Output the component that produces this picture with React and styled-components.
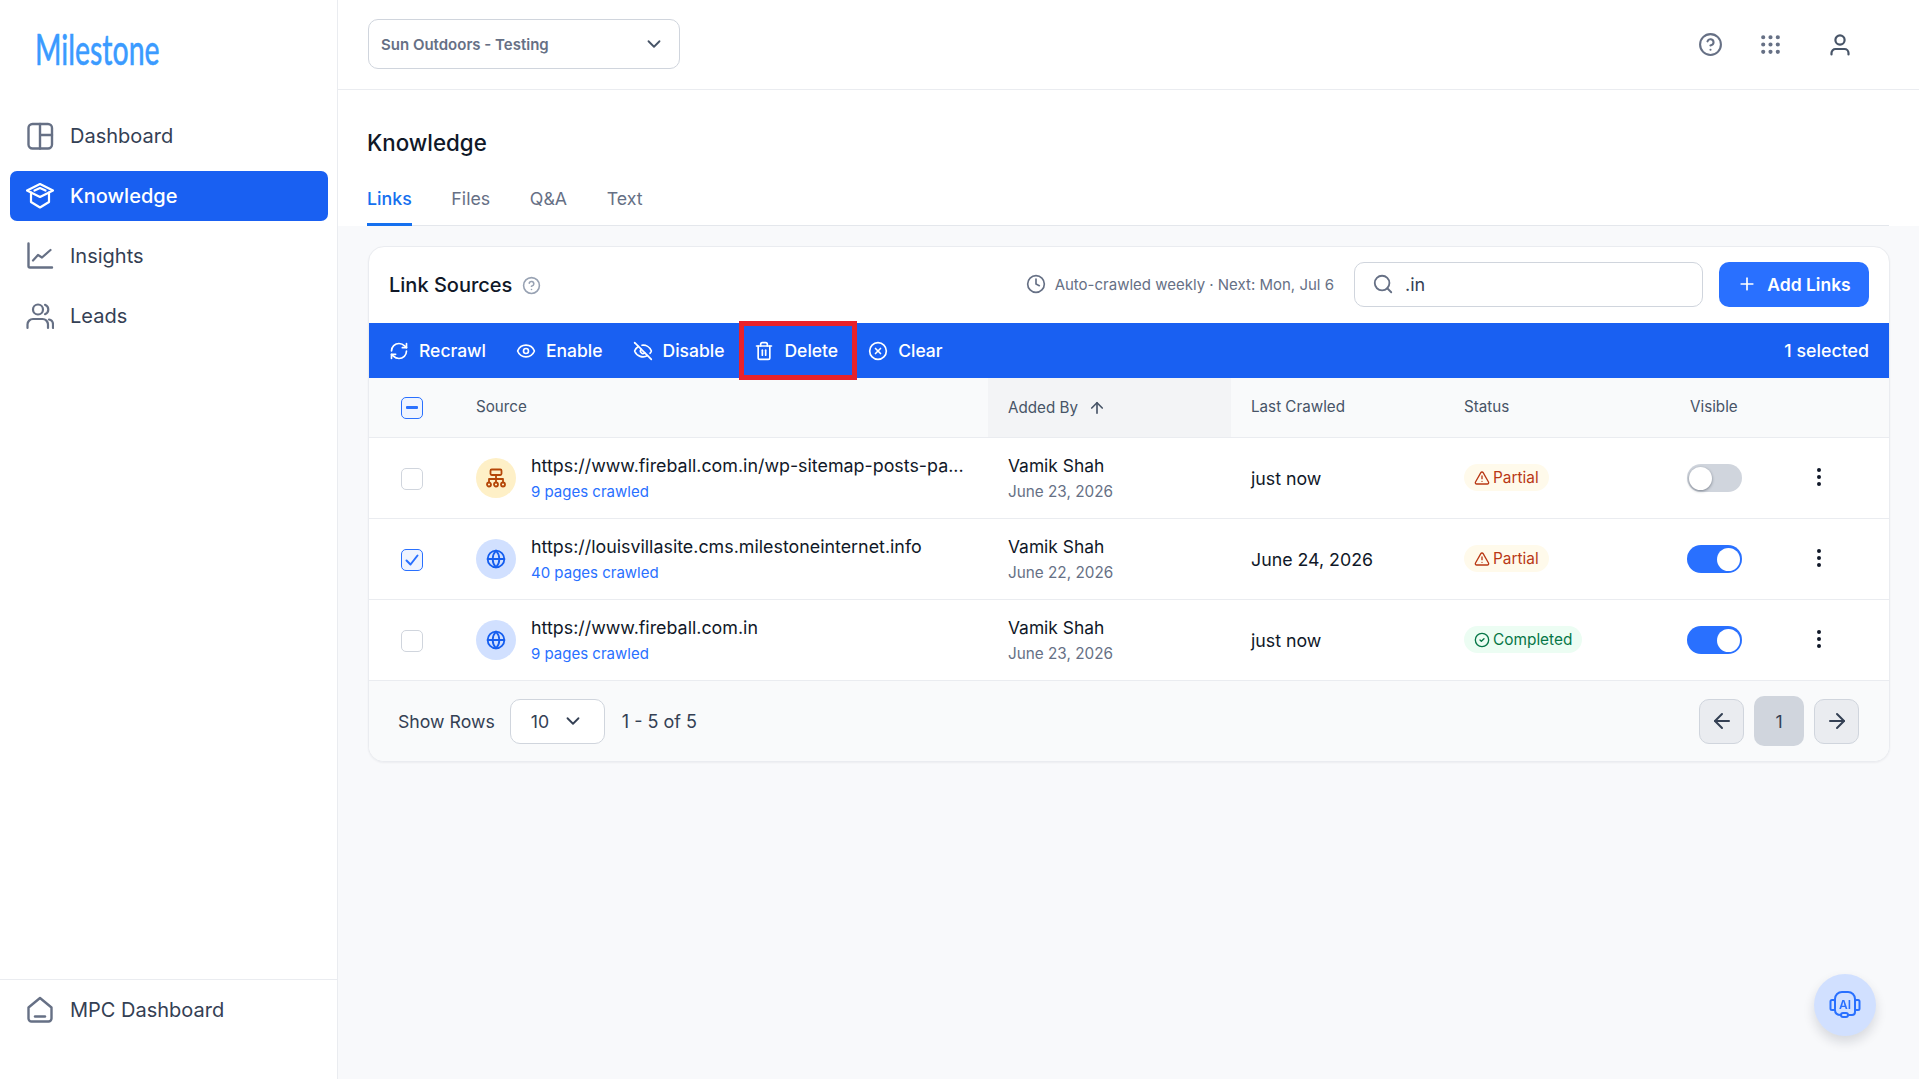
import React from 'react';
import styled, { createGlobalStyle } from 'styled-components';
import {
  ArrowLeft, ArrowRight, ArrowUp, ChevronDown, CircleCheck, CircleHelp, CircleX, Clock, EllipsisVertical,
  Eye, EyeOff, Globe, Grip, Plus, RefreshCw, Search, Trash2, TriangleAlert,
} from 'lucide-react';

const GlobalStyle = createGlobalStyle`
  html, body { margin: 0; padding: 0; height: 100%; }
  body { font-family: Inter, "Liberation Sans", sans-serif; background: #f8f9fb; color: #101828; }
  * { box-sizing: border-box; }
`;

const Page = styled.div`
  display: flex;
  width: 100%;
  height: 1079px;
  overflow: hidden;
`;

// left menu
const Sidebar = styled.aside`
  width: 338px;
  flex: none;
  display: flex;
  flex-direction: column;
  background: white;
  border-right: 1px solid #eaecf0;
`;

const LogoBox = styled.div`
  height: 99px;
  padding: 24px 0 0 35px;
`;

// condensed wordmark, the real logo face is not available
const LogoText = styled.div`
  display: inline-block;
  font-family: Lato, sans-serif;
  font-size: 43px;
  line-height: 50px;
  font-weight: 500;
  color: #3b9bff;
  -webkit-text-stroke: 0.4px #3b9bff;
  transform: scaleX(0.66);
  transform-origin: left center;
`;

const Menu = styled.nav`
  flex: 1;
  padding: 12px 9px 0 10px;
  display: flex;
  flex-direction: column;
  gap: 10px;
`;

const MenuItem = styled.div`
  height: 50px;
  display: flex;
  align-items: center;
  gap: 16px;
  padding-left: 16px;
  border-radius: 7px;
  font-size: 20px;
  font-weight: ${p => (p.$active ? 500 : 400)};
  color: ${p => (p.$active ? 'white' : '#344054')};
  background: ${p => (p.$active ? '#1960f2' : 'transparent')};
  svg { color: ${p => (p.$active ? 'white' : '#667085')}; flex: none; }
`;

const SidebarFoot = styled.div`
  height: 100px;
  padding: 5px 10px 0;
  border-top: 1px solid #eaecf0;
`;

const Main = styled.main`
  flex: 1;
  min-width: 0;
  display: flex;
  flex-direction: column;
`;

const TopBar = styled.header`
  height: 90px;
  flex: none;
  display: flex;
  align-items: center;
  justify-content: space-between;
  padding: 0 67px 0 30px;
  background: white;
  border-bottom: 1px solid #eaecf0;
`;

const SiteSelect = styled.div`
  width: 312px;
  height: 50px;
  margin-top: -1px;
  display: flex;
  align-items: center;
  justify-content: space-between;
  padding: 0 14px 0 12px;
  border: 1px solid #d0d5dd;
  border-radius: 10px;
  font-size: 15px;
  font-weight: 600;
  color: #667085;
  svg { color: #475467; }
`;

const TopIcons = styled.div`
  display: flex;
  align-items: center;
  gap: 35px;
  color: #667085;
`;

const UserSlot = styled.div`
  display: flex;
  margin-left: 10px;
`;

const TitleArea = styled.div`
  height: 136px;
  flex: none;
  padding: 37px 30px 0 29px;
  background: white;
`;

const PageTitle = styled.h1`
  margin: 0;
  font-size: 22.300px;
  line-height: 32px;
  font-weight: 500;
  color: #101828;
`;

const Tabs = styled.div`
  display: flex;
  gap: 39.600px;
  height: 67px;
  padding-top: 28px;
  border-bottom: 1px solid #e4e7ec;
`;

const Tab = styled.div`
  height: 39px;
  font-size: 17.800px;
  line-height: 24px;
  color: ${p => (p.$active ? '#1570ef' : '#667085')};
  font-weight: ${p => (p.$active ? 500 : 400)};
  border-bottom: ${p => (p.$active ? '3px solid #1570ef' : 'none')};
`;

const Body = styled.div`
  flex: 1;
  padding: 20px 29px 0 30px;
`;

const Card = styled.section`
  height: 516px;
  background: white;
  border: 1px solid #eaecf0;
  border-radius: 16px;
  overflow: hidden;
  box-shadow: 0 1px 2px rgba(16, 24, 40, 0.05);
`;

const CardHead = styled.div`
  height: 76px;
  display: flex;
  align-items: center;
  padding: 0 20px 2px 20px;
`;

const CardTitle = styled.h2`
  margin: 2px 10px 0 0;
  font-size: 20px;
  font-weight: 500;
  color: #101828;
`;

const TitleHelp = styled.div`
  display: flex;
  margin-top: 2px;
  color: #98a2b3;
`;

const Spacer = styled.div`
  flex: 1;
`;

const CrawlNote = styled.div`
  display: flex;
  align-items: center;
  gap: 9px;
  margin-right: 20px;
  font-size: 15px;
  color: #667085;
`;

const SearchBox = styled.div`
  width: 349px;
  height: 45px;
  display: flex;
  align-items: center;
  gap: 11px;
  padding-left: 17px;
  border: 1px solid #d0d5dd;
  border-radius: 10px;
  font-size: 18px;
  color: #344054;
  svg { color: #667085; }
`;

const AddButton = styled.button`
  width: 150px;
  height: 45px;
  margin-left: 16px;
  display: flex;
  align-items: center;
  justify-content: center;
  gap: 10px;
  border: none;
  border-radius: 10px;
  background: #2970ff;
  color: white;
  font-family: inherit;
  font-size: 17.500px;
  font-weight: 600;
`;

const BulkBar = styled.div`
  height: 55px;
  display: flex;
  align-items: center;
  gap: 30px;
  padding: 0 20px;
  background: #1960f2;
  color: white;
  font-size: 17.500px;
  font-weight: 500;
`;

const BulkAction = styled.div`
  position: relative;
  display: flex;
  align-items: center;
  gap: 10px;
`;

// red annotation box over the delete action
const Highlight = styled.div`
  position: absolute;
  left: -15px;
  right: -19px;
  top: -19px;
  bottom: -19px;
  border: 5px solid #e8222a;
`;

const SelectedCount = styled.div`
  margin-left: auto;
  font-size: 17.800px;
`;

const Row = styled.div`
  display: grid;
  grid-template-columns: 107px 512px 243px 213px 224px 137px 1fr;
  height: ${p => (p.$head ? 60 : 81)}px;
  align-items: stretch;
  border-bottom: 1px solid #eaecf0;
  background: ${p => (p.$head ? '#f9fafb' : 'white')};
`;

const Cell = styled.div`
  display: flex;
  flex-direction: ${p => (p.$stack ? 'column' : 'row')};
  justify-content: ${p => (p.$stack ? 'center' : 'flex-start')};
  align-items: ${p => (p.$stack ? 'flex-start' : 'center')};
  padding-left: ${p => p.$pad ?? 20}px;
  font-size: 17.800px;
  color: #101828;
`;

const HeadCell = styled(Cell)`
  font-size: 15.200px;
  color: #475467;
  background: ${p => (p.$sorted ? '#f3f4f6' : 'transparent')};
  padding-bottom: ${p => (p.$lift ? 2 : 0)}px;
  gap: 10px;
`;

const Check = styled.div`
  width: 22px;
  height: 22px;
  margin-top: ${p => (p.$head ? 0 : 1)}px;
  display: flex;
  align-items: center;
  justify-content: center;
  border-radius: 5px;
  border: ${p => (p.$on ? '1.500px solid #2970ff' : '1.500px solid #d0d5dd')};
  background: ${p => (p.$on ? '#eff4ff' : 'white')};
  color: #2970ff;
`;

const Dash = styled.div`
  width: 12px;
  height: 3px;
  background: #2970ff;
  border-radius: 1px;
`;

const SourceIcon = styled.div`
  width: 40px;
  height: 40px;
  flex: none;
  display: flex;
  align-items: center;
  justify-content: center;
  border-radius: 50%;
  background: ${p => (p.$map ? '#fef0c7' : '#d1e0ff')};
  color: ${p => (p.$map ? '#b54708' : '#155eef')};
`;

const SourceText = styled.div`
  margin-left: 15px;
  display: flex;
  flex-direction: column;
`;

const MainLine = styled.div`
  font-size: ${p => (p.$name ? 17.400 : 17.850)}px;
  line-height: 26px;
  color: #101828;
`;

const SubLine = styled.div`
  font-size: ${p => (p.$link ? 15 : 15.300)}px;
  line-height: 25px;
  color: ${p => (p.$link ? '#2970ff' : '#667085')};
`;

const Pill = styled.div`
  height: 27px;
  display: flex;
  align-items: center;
  gap: 3px;
  padding: 0 10px;
  margin-top: -1px;
  border-radius: 14px;
  font-size: 15.400px;
  color: ${p => (p.$ok ? '#067647' : '#b93815')};
  background: ${p => (p.$ok ? '#ecfdf3' : '#fffaeb')};
`;

const Toggle = styled.div`
  position: relative;
  width: 55px;
  height: 28px;
  margin-top: -1px;
  border-radius: 14px;
  background: ${p => (p.$on ? '#2970ff' : '#d0d5dd')};
`;

const Knob = styled.div`
  position: absolute;
  top: 3px;
  left: ${p => (p.$on ? 30 : 2)}px;
  width: 23px;
  height: 23px;
  border-radius: 50%;
  background: white;
  box-shadow: ${p => (p.$on ? 'none' : '0 1px 3px rgba(16, 24, 40, 0.45)')};
`;

const Kebab = styled.div`
  display: flex;
  align-items: center;
  justify-content: center;
  width: 28px;
  margin-top: -3px;
  color: #101828;
`;

const Footer = styled.div`
  height: 82px;
  display: flex;
  align-items: center;
  padding: 0 30px 2px 29px;
  background: #f9fafb;
  font-size: 17.700px;
  color: #344054;
`;

const RowsSelect = styled.div`
  width: 95px;
  height: 45px;
  margin: 0 17px 0 15px;
  display: flex;
  align-items: center;
  gap: 13px;
  padding-left: 20px;
  border: 1px solid #d0d5dd;
  border-radius: 10px;
  background: white;
  svg { color: #344054; }
`;

const RangeText = styled.div`
  font-size: 18px;
`;

const Pager = styled.div`
  margin-left: auto;
  display: flex;
  align-items: center;
  gap: 10px;
`;

const PageButton = styled.div`
  width: ${p => (p.$current ? 50 : 45)}px;
  height: ${p => (p.$current ? 50 : 45)}px;
  display: flex;
  align-items: center;
  justify-content: center;
  border-radius: 10px;
  border: ${p => (p.$current ? 'none' : '1px solid #d0d5dd')};
  background: ${p => (p.$current ? '#d0d5dd' : '#eaecf0')};
  color: #344054;
`;

const AiButton = styled.div`
  position: fixed;
  left: 1814px;
  top: 974px;
  width: 62px;
  height: 62px;
  display: flex;
  align-items: center;
  justify-content: center;
  border-radius: 50%;
  background: #d1e0ff;
  color: #2970ff;
  box-shadow: 0 6px 12px rgba(16, 24, 40, 0.14);
`;

const line = { fill: 'none', stroke: 'currentColor', strokeWidth: 2.2, strokeLinecap: 'round', strokeLinejoin: 'round' };

const DashboardIcon = () => (
  <svg width="28" height="28" viewBox="0 0 28 28" {...line}>
    <rect x="2.500" y="2" width="23.500" height="24.500" rx="4" strokeWidth="2.400" />
    <path d="M14 2v24.500M14 13h12" strokeWidth="2.400" />
  </svg>
);

const KnowledgeIcon = () => (
  <svg width="28" height="28" viewBox="0 0 28 28" {...line} strokeWidth="2.200">
    <path d="M14 2l13 6.500-4 2V20l-9 5.500L5 20v-9.500l-4-2z" />
    <path d="M5 10.500l9 4.500 9-4.500" />
    <path d="M8.500 8.500L14 6l5.500 2.500" />
  </svg>
);

const InsightsIcon = () => (
  <svg width="28" height="28" viewBox="0 0 28 28" {...line}>
    <path d="M2.500 1.500v22.500a1.500 1.500 0 0 0 1.500 1.500h22" strokeWidth="2.400" />
    <path d="M7 18.500l5-5.500 4 2.500 8.500-7.500" />
  </svg>
);

const LeadsIcon = () => (
  <svg width="28" height="28" viewBox="0 0 28 28" {...line}>
    <circle cx="12" cy="7.500" r="5" />
    <path d="M19 2.800a5 5 0 0 1 0 9.400" />
    <path d="M1.500 26v-3.500a5.500 5.500 0 0 1 5.500-5.500h9.500a5.500 5.500 0 0 1 5.500 5.500V26" />
    <path d="M23 17.500a5 5 0 0 1 4 5V26" />
  </svg>
);

const HomeIcon = () => (
  <svg width="28" height="28" viewBox="0 0 28 28" {...line} strokeWidth="2.400">
    <path d="M2.500 11.500L14 2l11.500 9.500v11a3 3 0 0 1-3 3h-17a3 3 0 0 1-3-3z" />
    <path d="M9 20.500h10" />
  </svg>
);

const UserIcon = () => (
  <svg width="24" height="24" viewBox="0 0 24 24" fill="none" stroke="#475467" strokeWidth="2.200" strokeLinecap="round">
    <circle cx="12" cy="7" r="4.600" />
    <path d="M3.500 21.500v-1.500a4 4 0 0 1 4-4h9a4 4 0 0 1 4 4v1.500" />
  </svg>
);

const SitemapIcon = () => (
  <svg width="20" height="20" viewBox="0 0 20 20" fill="none" stroke="currentColor" strokeWidth="1.800" strokeLinecap="round" strokeLinejoin="round">
    <rect x="4.500" y="1.500" width="11" height="5.500" rx="1.200" />
    <path d="M3 11h14M10 7v7M3 11v3M17 11v3" />
    <circle cx="3" cy="16.500" r="2" />
    <circle cx="10" cy="16.500" r="2" />
    <circle cx="17" cy="16.500" r="2" />
  </svg>
);

const HeadsetAiIcon = () => (
  <svg width="32" height="32" viewBox="0 0 32 32" fill="none" stroke="currentColor" strokeWidth="2" strokeLinecap="round">
    <rect x="1.500" y="11" width="4.500" height="10" rx="1.500" />
    <rect x="26" y="11" width="4.500" height="10" rx="1.500" />
    <path d="M6 12V10a7 7 0 0 1 7-7h6a7 7 0 0 1 7 7v13a3 3 0 0 1-3 3h-3" />
    <path d="M6 21c0 3 2 5 6 5" />
    <rect x="12" y="24" width="7" height="4" rx="2" />
    <text x="16" y="20" textAnchor="middle" fontFamily="Inter, sans-serif" fontSize="12" fontWeight="600" fill="currentColor" stroke="none">AI</text>
  </svg>
);

const menu = [
  { label: 'Dashboard', icon: <DashboardIcon /> },
  { label: 'Knowledge', icon: <KnowledgeIcon />, active: true },
  { label: 'Insights', icon: <InsightsIcon /> },
  { label: 'Leads', icon: <LeadsIcon /> },
];

const rows = [
  { url: 'https://www.fireball.com.in/wp-sitemap-posts-pa...', pages: '9 pages crawled', map: true, date: 'June 23, 2026', crawled: 'just now', ok: false, on: false, checked: false },
  { url: 'https://louisvillasite.cms.milestoneinternet.info', pages: '40 pages crawled', date: 'June 22, 2026', crawled: 'June 24, 2026', ok: false, on: true, checked: true },
  { url: 'https://www.fireball.com.in', pages: '9 pages crawled', date: 'June 23, 2026', crawled: 'just now', ok: true, on: true, checked: false },
];

const App = () => {
  return (
    <Page>
      <GlobalStyle />
      <Sidebar>
        <LogoBox><LogoText>Milestone</LogoText></LogoBox>
        <Menu>
          {menu.map(item => (
            <MenuItem key={item.label} $active={item.active}>{item.icon}{item.label}</MenuItem>
          ))}
        </Menu>
        <SidebarFoot>
          <MenuItem><HomeIcon />MPC Dashboard</MenuItem>
        </SidebarFoot>
      </Sidebar>
      <Main>
        <TopBar>
          <SiteSelect>Sun Outdoors - Testing<ChevronDown size={22} /></SiteSelect>
          <TopIcons>
            <CircleHelp size={25} />
            <Grip size={25} />
            <UserSlot><UserIcon /></UserSlot>
          </TopIcons>
        </TopBar>
        <TitleArea>
          <PageTitle>Knowledge</PageTitle>
          <Tabs>
            <Tab $active>Links</Tab>
            <Tab>Files</Tab>
            <Tab>Q&amp;A</Tab>
            <Tab>Text</Tab>
          </Tabs>
        </TitleArea>
        <Body>
          <Card>
            <CardHead>
              <CardTitle>Link Sources</CardTitle>
              <TitleHelp><CircleHelp size={19} /></TitleHelp>
              <Spacer />
              <CrawlNote><Clock size={20} />Auto-crawled weekly · Next: Mon, Jul 6</CrawlNote>
              <SearchBox><Search size={22} />.in</SearchBox>
              <AddButton><Plus size={20} />Add Links</AddButton>
            </CardHead>
            <BulkBar>
              <BulkAction><RefreshCw size={20} />Recrawl</BulkAction>
              <BulkAction><Eye size={20} />Enable</BulkAction>
              <BulkAction><EyeOff size={20} />Disable</BulkAction>
              <BulkAction><Trash2 size={20} />Delete<Highlight /></BulkAction>
              <BulkAction><CircleX size={20} />Clear</BulkAction>
              <SelectedCount>1 selected</SelectedCount>
            </BulkBar>
            <Row $head>
              <HeadCell $pad={32}><Check $head $on><Dash /></Check></HeadCell>
              <HeadCell $pad={0} $lift>Source</HeadCell>
              <HeadCell $sorted>Added By<ArrowUp size={18} strokeWidth={2.200} /></HeadCell>
              <HeadCell $lift>Last Crawled</HeadCell>
              <HeadCell $lift>Status</HeadCell>
              <HeadCell $pad={22} $lift>Visible</HeadCell>
            </Row>
            {rows.map(row => (
              <Row key={row.url}>
                <Cell $pad={32}>
                  <Check $on={row.checked}>{row.checked && <svg width="16" height="16" viewBox="0 0 16 16" fill="none" stroke="currentColor" strokeWidth="2" strokeLinecap="round" strokeLinejoin="round"><path d="M2.500 8.500l4 4 7-9" /></svg>}</Check>
                </Cell>
                <Cell $pad={0}>
                  <SourceIcon $map={row.map}>{row.map ? <SitemapIcon /> : <Globe size={20} strokeWidth={2.200} />}</SourceIcon>
                  <SourceText>
                    <MainLine>{row.url}</MainLine>
                    <SubLine $link>{row.pages}</SubLine>
                  </SourceText>
                </Cell>
                <Cell $stack>
                  <MainLine $name>Vamik Shah</MainLine>
                  <SubLine>{row.date}</SubLine>
                </Cell>
                <Cell>{row.crawled}</Cell>
                <Cell>
                  <Pill $ok={row.ok}>
                    {row.ok ? <CircleCheck size={16} /> : <TriangleAlert size={16} />}
                    {row.ok ? 'Completed' : 'Partial'}
                  </Pill>
                </Cell>
                <Cell $pad={19}>
                  <Toggle $on={row.on}><Knob $on={row.on} /></Toggle>
                </Cell>
                <Cell $pad={0}>
                  <Kebab><EllipsisVertical size={24} /></Kebab>
                </Cell>
              </Row>
            ))}
            <Footer>
              Show Rows
              <RowsSelect>10<ChevronDown size={22} /></RowsSelect>
              <RangeText>1 - 5 of 5</RangeText>
              <Pager>
                <PageButton><ArrowLeft size={24} /></PageButton>
                <PageButton $current>1</PageButton>
                <PageButton><ArrowRight size={24} /></PageButton>
              </Pager>
            </Footer>
          </Card>
        </Body>
      </Main>
      <AiButton><HeadsetAiIcon /></AiButton>
    </Page>
  );
};

export default App;
